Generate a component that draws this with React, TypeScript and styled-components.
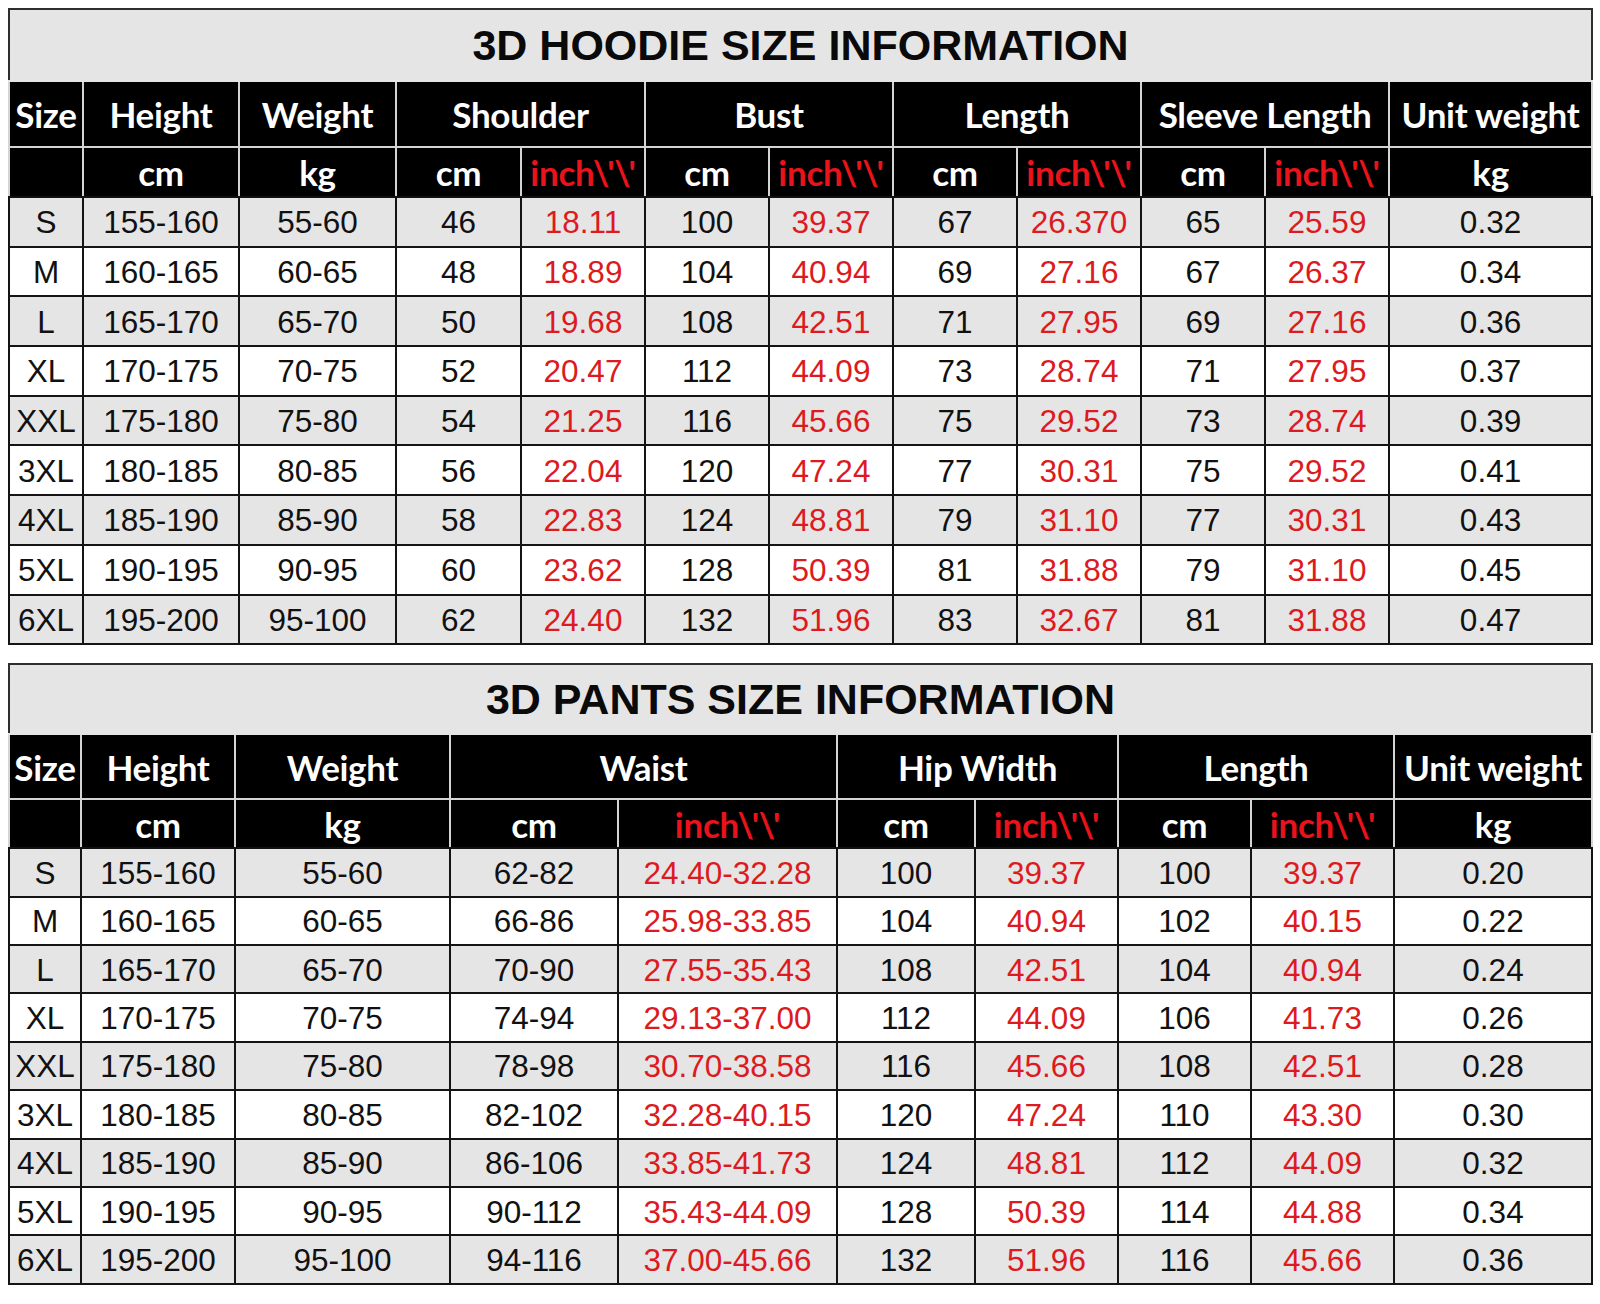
import React from "react";
import styled, { createGlobalStyle } from "styled-components";

const GlobalStyle = createGlobalStyle`
  html, body {
    margin: 0;
    padding: 0;
    background: #ffffff;
  }
`;

const Page = styled.div`
  width: 1600px;
  padding: 8px 8px 0 8px;
  box-sizing: border-box;
  display: flex;
  flex-direction: column;
  gap: 18px;
`;

const SizeTable = styled.table`
  width: 1583px;
  table-layout: fixed;
  border-collapse: collapse;
  border: 2px solid #2e2e2e;
`;

const TitleRow = styled.tr<{ $h: number }>`
  height: ${(p) => p.$h}px;
`;

const TitleCell = styled.th`
  background: #e6e5e6;
  color: #0a0a0a;
  font-family: "Liberation Sans", Arial, sans-serif;
  font-weight: 700;
  font-size: 43px;
  text-align: center;
  vertical-align: middle;
  padding: 0;
  border: 2px solid #2e2e2e;
  border-bottom: 2px solid #e6e5e6;
`;

const HeadRow = styled.tr<{ $h: number }>`
  height: ${(p) => p.$h}px;
`;

const HeadCell = styled.th<{ $red?: boolean; $last?: boolean }>`
  background: #000000;
  color: ${(p) => (p.$red ? "#e8131b" : "#ffffff")};
  font-family: Lato, "Open Sans", sans-serif;
  font-weight: 700;
  font-size: 35px;
  letter-spacing: -0.3px;
  text-align: center;
  vertical-align: middle;
  white-space: nowrap;
  padding: 0;
  border: 2px solid #d4d4d4;
  border-bottom-color: ${(p) => (p.$last ? "#111111" : "#d4d4d4")};
  overflow: hidden;
`;

const DataRow = styled.tr<{ $shade: boolean; $h: number }>`
  height: ${(p) => p.$h}px;
  background: ${(p) => (p.$shade ? "#e6e5e6" : "#ffffff")};
`;

const DataCell = styled.td<{ $red?: boolean }>`
  color: ${(p) => (p.$red ? "#dc1a20" : "#111111")};
  font-family: "Liberation Sans", Arial, sans-serif;
  font-size: 31.5px;
  text-align: center;
  vertical-align: middle;
  white-space: nowrap;
  padding: 2px 0 0 0;
  border: 2px solid #141414;
`;

type Group = { label: string; span: number };

type Spec = {
  title: string;
  widths: number[];
  groups: Group[];
  units: string[];
  red: number[];
  rows: string[][];
  heights: { title: number; head: number; unit: number; row: number };
};

const INCH = "inch\\'\\'";

const hoodie: Spec = {
  title: "3D HOODIE SIZE INFORMATION",
  widths: [74, 156, 157, 125, 124, 124, 124, 124, 124, 124, 124, 203],
  groups: [
    { label: "Size", span: 1 },
    { label: "Height", span: 1 },
    { label: "Weight", span: 1 },
    { label: "Shoulder", span: 2 },
    { label: "Bust", span: 2 },
    { label: "Length", span: 2 },
    { label: "Sleeve Length", span: 2 },
    { label: "Unit weight", span: 1 },
  ],
  units: ["", "cm", "kg", "cm", INCH, "cm", INCH, "cm", INCH, "cm", INCH, "kg"],
  red: [4, 6, 8, 10],
  rows: [
    ["S", "155-160", "55-60", "46", "18.11", "100", "39.37", "67", "26.370", "65", "25.59", "0.32"],
    ["M", "160-165", "60-65", "48", "18.89", "104", "40.94", "69", "27.16", "67", "26.37", "0.34"],
    ["L", "165-170", "65-70", "50", "19.68", "108", "42.51", "71", "27.95", "69", "27.16", "0.36"],
    ["XL", "170-175", "70-75", "52", "20.47", "112", "44.09", "73", "28.74", "71", "27.95", "0.37"],
    ["XXL", "175-180", "75-80", "54", "21.25", "116", "45.66", "75", "29.52", "73", "28.74", "0.39"],
    ["3XL", "180-185", "80-85", "56", "22.04", "120", "47.24", "77", "30.31", "75", "29.52", "0.41"],
    ["4XL", "185-190", "85-90", "58", "22.83", "124", "48.81", "79", "31.10", "77", "30.31", "0.43"],
    ["5XL", "190-195", "90-95", "60", "23.62", "128", "50.39", "81", "31.88", "79", "31.10", "0.45"],
    ["6XL", "195-200", "95-100", "62", "24.40", "132", "51.96", "83", "32.67", "81", "31.88", "0.47"],
  ],
  heights: { title: 72, head: 66, unit: 50, row: 49.7 },
};

const pants: Spec = {
  title: "3D PANTS SIZE INFORMATION",
  widths: [72, 154, 215, 168, 219, 138, 143, 133, 143, 198],
  groups: [
    { label: "Size", span: 1 },
    { label: "Height", span: 1 },
    { label: "Weight", span: 1 },
    { label: "Waist", span: 2 },
    { label: "Hip Width", span: 2 },
    { label: "Length", span: 2 },
    { label: "Unit weight", span: 1 },
  ],
  units: ["", "cm", "kg", "cm", INCH, "cm", INCH, "cm", INCH, "kg"],
  red: [4, 6, 8],
  rows: [
    ["S", "155-160", "55-60", "62-82", "24.40-32.28", "100", "39.37", "100", "39.37", "0.20"],
    ["M", "160-165", "60-65", "66-86", "25.98-33.85", "104", "40.94", "102", "40.15", "0.22"],
    ["L", "165-170", "65-70", "70-90", "27.55-35.43", "108", "42.51", "104", "40.94", "0.24"],
    ["XL", "170-175", "70-75", "74-94", "29.13-37.00", "112", "44.09", "106", "41.73", "0.26"],
    ["XXL", "175-180", "75-80", "78-98", "30.70-38.58", "116", "45.66", "108", "42.51", "0.28"],
    ["3XL", "180-185", "80-85", "82-102", "32.28-40.15", "120", "47.24", "110", "43.30", "0.30"],
    ["4XL", "185-190", "85-90", "86-106", "33.85-41.73", "124", "48.81", "112", "44.09", "0.32"],
    ["5XL", "190-195", "90-95", "90-112", "35.43-44.09", "128", "50.39", "114", "44.88", "0.34"],
    ["6XL", "195-200", "95-100", "94-116", "37.00-45.66", "132", "51.96", "116", "45.66", "0.36"],
  ],
  heights: { title: 70, head: 65, unit: 49, row: 48.4 },
};

const SizeChart: React.FC<{ spec: Spec }> = ({ spec }) => (
  <SizeTable>
    <colgroup>
      {spec.widths.map((w, i) => (
        <col key={i} style={{ width: w }} />
      ))}
    </colgroup>
    <thead>
      <TitleRow $h={spec.heights.title}>
        <TitleCell colSpan={spec.widths.length}>{spec.title}</TitleCell>
      </TitleRow>
      <HeadRow $h={spec.heights.head}>
        {spec.groups.map((g) => (
          <HeadCell key={g.label} colSpan={g.span}>
            {g.label}
          </HeadCell>
        ))}
      </HeadRow>
      <HeadRow $h={spec.heights.unit}>
        {spec.units.map((u, i) => (
          <HeadCell key={i} $red={spec.red.includes(i)} $last>
            {u}
          </HeadCell>
        ))}
      </HeadRow>
    </thead>
    <tbody>
      {spec.rows.map((row, r) => (
        <DataRow key={row[0]} $shade={r % 2 === 0} $h={spec.heights.row}>
          {row.map((cell, i) => (
            <DataCell key={i} $red={spec.red.includes(i)}>
              {cell}
            </DataCell>
          ))}
        </DataRow>
      ))}
    </tbody>
  </SizeTable>
);

const App: React.FC = () => (
  <>
    <GlobalStyle />
    <Page>
      <SizeChart spec={hoodie} />
      <SizeChart spec={pants} />
    </Page>
  </>
);

export default App;
